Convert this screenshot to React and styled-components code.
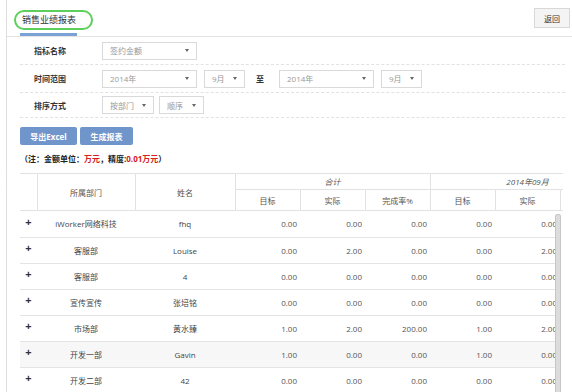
import styled, { createGlobalStyle } from "styled-components";

const GlobalStyle = createGlobalStyle`
  html, body {
    margin: 0;
    padding: 0;
    background: #fff;
  }
  body {
    font-family: "Open Sans", "Noto Sans CJK SC", sans-serif;
    font-size: 8px;
    color: #444;
  }
`;

const Page = styled.div`
  position: relative;
  width: 565px;
  height: 392px;
  margin-left: 6px;
  border-left: 1px solid #dedede;
  overflow: hidden;
  background: #fff;
`;

const Notch = styled.svg`
  position: absolute;
  left: -7px;
  top: 170px;
`;

const Header = styled.div`
  display: flex;
  justify-content: space-between;
  align-items: flex-start;
  height: 36px;
  border-bottom: 1px solid #e3e3e3;
`;

const TabCol = styled.div`
  display: flex;
  flex-direction: column;
  margin-left: 7px;
`;

const Tab = styled.div`
  margin-top: 10px;
  width: 79px;
  height: 20px;
  box-sizing: border-box;
  border: 2px solid #5ccf5c;
  border-radius: 10px;
  padding-left: 6px;
  font-size: 9px;
  line-height: 16px;
  color: #333;
  font-family: "Noto Sans CJK SC", sans-serif;
  white-space: nowrap;
`;

const TabLine = styled.div`
  margin: 3px 0 0 6px;
  width: 57px;
  height: 3px;
  background: #7aa2d6;
`;

const BackButton = styled.button`
  margin: 8px 2px 0 0;
  width: 36px;
  height: 20px;
  padding: 0;
  border: 1px solid #d8d8d8;
  background: #f4f4f4;
  color: #333;
  font-size: 8px;
  font-family: "Noto Sans CJK SC", sans-serif;
`;

const Form = styled.div`
  margin: 0 0 0 13px;
  width: 545px;
`;

const Row = styled.div`
  display: flex;
  align-items: center;
  height: ${(p) => p.$h || 28}px;
  border-bottom: 1px dashed #e2e2e2;
  box-sizing: border-box;
`;

const Label = styled.div`
  width: 82px;
  padding-left: 14px;
  box-sizing: border-box;
  font-family: "Noto Sans CJK SC", sans-serif;
  font-weight: 700;
  font-size: 8px;
  color: #333;
`;

const Select = styled.div`
  display: flex;
  align-items: center;
  justify-content: space-between;
  width: ${(p) => p.$w}px;
  height: 18px;
  margin-right: ${(p) => p.$mr ?? 7}px;
  padding: 0 7px 0 7px;
  box-sizing: border-box;
  border: 1px solid #d9d9d9;
  color: #999;
  font-size: 8px;
  font-family: "Open Sans", "Noto Sans CJK SC", sans-serif;
  white-space: nowrap;
  &::after {
    content: "";
    border-left: 2.5px solid transparent;
    border-right: 2.5px solid transparent;
    border-top: 3px solid #666;
  }
`;

const To = styled.span`
  margin: 0 15px 0 4px;
  color: #333;
  font-weight: 700;
  font-family: "Noto Sans CJK SC", sans-serif;
`;

const Actions = styled.div`
  display: flex;
  gap: 3px;
  margin-top: 9px;
`;

const BlueButton = styled.button`
  width: ${(p) => p.$w}px;
  height: 18px;
  padding: 0;
  border: none;
  border-radius: 2px;
  background: #7095cb;
  color: #fff;
  font-weight: 700;
  font-size: 8px;
  font-family: "Open Sans", "Noto Sans CJK SC", sans-serif;
`;

const Note = styled.div`
  margin-top: 7px;
  height: 14px;
  line-height: 14px;
  font-size: 8px;
  color: #222;
  font-weight: 700;
  font-family: "Open Sans", "Noto Sans CJK SC", sans-serif;
  em {
    font-style: normal;
    color: #d42020;
  }
`;

const HeadClip = styled.div`
  margin: 7px 0 0 13px;
  width: 543px;
  overflow: hidden;
`;

const BodyWrap = styled.div`
  display: flex;
  margin-left: 13px;
`;

const BodyClip = styled.div`
  width: 535px;
  overflow: hidden;
`;

const ScrollBar = styled.div`
  width: 6px;
  height: 190px;
  margin-top: 3px;
  box-sizing: border-box;
  border: 1px solid #c6c6c6;
  border-radius: 2px;
  background: #dcdcdc;
`;

const Table = styled.table`
  width: 605px;
  table-layout: fixed;
  border-collapse: collapse;
  font-size: 8px;
  font-family: "Open Sans", "Noto Sans CJK SC", sans-serif;
`;

const Th = styled.th`
  height: ${(p) => p.$h}px;
  padding: 0;
  border: 1px solid #e2e2e2;
  border-left: ${(p) => (p.$first ? "none" : "1px solid #e2e2e2")};
  font-weight: 400;
  font-style: ${(p) => (p.$italic ? "italic" : "normal")};
  color: #555;
  text-align: center;
  font-family: "Open Sans", "Noto Sans CJK SC", sans-serif;
`;

const Tr = styled.tr`
  height: 26px;
  background: ${(p) => (p.$hl ? "#f7f7f7" : "#fff")};
  border-bottom: 1px solid #e4e4e4;
`;

const Td = styled.td`
  padding: ${(p) => (p.$num ? "0 3px 0 0" : "0")};
  text-align: ${(p) => (p.$num ? "right" : "center")};
  font-size: 8px;
  color: ${(p) => (p.$num ? "#555" : "#444")};
  white-space: nowrap;
  overflow: hidden;
`;

const Plus = styled.td`
  padding: 0 0 5px 0;
  text-align: center;
  font-weight: 700;
  font-size: 11px;
  color: #333;
`;

const widths = [17, 98, 100, 65, 65, 65, 65, 65, 65];

const Cols = () => (
  <colgroup>
    {widths.map((w, i) => (
      <col key={i} style={{ width: w }} />
    ))}
  </colgroup>
);

const rows = [
  ["iWorker网络科技", "fhq", "0.00", "0.00", "0.00", "0.00", "0.00", "0.00"],
  ["客服部", "Louise", "0.00", "2.00", "0.00", "0.00", "2.00", "0.00"],
  ["客服部", "4", "0.00", "0.00", "0.00", "0.00", "0.00", "0.00"],
  ["宣传宣传", "张培铭", "0.00", "0.00", "0.00", "0.00", "0.00", "0.00"],
  ["市场部", "黄水臻", "1.00", "2.00", "200.00", "1.00", "2.00", "200.00"],
  ["开发一部", "Gavin", "1.00", "0.00", "0.00", "1.00", "0.00", "0.00"],
  ["开发二部", "42", "0.00", "0.00", "0.00", "0.00", "0.00", "0.00"],
];

export default function App() {
  return (
    <>
      <GlobalStyle />
      <Page>
        <Notch width="8" height="24" viewBox="0 0 8 24">
          <path d="M7 2 L2 11 L7 20" fill="#fff" stroke="#d8d8d8" strokeWidth="1" />
        </Notch>
        <Header>
          <TabCol>
            <Tab>销售业绩报表</Tab>
            <TabLine />
          </TabCol>
          <BackButton>返回</BackButton>
        </Header>

        <Form>
          <Row>
            <Label>指标名称</Label>
            <Select $w={95}>签约金额</Select>
          </Row>
          <Row>
            <Label>时间范围</Label>
            <Select $w={95}>2014年</Select>
            <Select $w={41}>9月</Select>
            <To>至</To>
            <Select $w={95}>2014年</Select>
            <Select $w={41}>9月</Select>
          </Row>
          <Row $h={25}>
            <Label>排序方式</Label>
            <Select $w={52} $mr={5}>按部门</Select>
            <Select $w={45}>顺序</Select>
          </Row>
          <Actions>
            <BlueButton $w={57}>导出Excel</BlueButton>
            <BlueButton $w={53}>生成报表</BlueButton>
          </Actions>
          <Note>
            （注：金额单位：<em>万元</em>，精度:<em>0.01万元</em>）
          </Note>
        </Form>

        <HeadClip>
          <Table>
            <Cols />
            <thead>
              <tr>
                <Th $h={15} rowSpan={2} $first />
                <Th rowSpan={2}>所属部门</Th>
                <Th rowSpan={2}>姓名</Th>
                <Th $h={15} colSpan={3} $italic>
                  合计
                </Th>
                <Th colSpan={3} $italic>
                  2014年09月
                </Th>
              </tr>
              <tr>
                <Th $h={20}>目标</Th>
                <Th>实际</Th>
                <Th>完成率%</Th>
                <Th>目标</Th>
                <Th>实际</Th>
                <Th>完成率%</Th>
              </tr>
            </thead>
          </Table>
        </HeadClip>

        <BodyWrap>
          <BodyClip>
            <Table>
              <Cols />
              <tbody>
                {rows.map((r, i) => (
                  <Tr key={i} $hl={i === 5}>
                    <Plus>+</Plus>
                    <Td>{r[0]}</Td>
                    <Td>{r[1]}</Td>
                    {r.slice(2).map((v, j) => (
                      <Td key={j} $num>
                        {v}
                      </Td>
                    ))}
                  </Tr>
                ))}
              </tbody>
            </Table>
          </BodyClip>
          <ScrollBar />
        </BodyWrap>
      </Page>
    </>
  );
}
